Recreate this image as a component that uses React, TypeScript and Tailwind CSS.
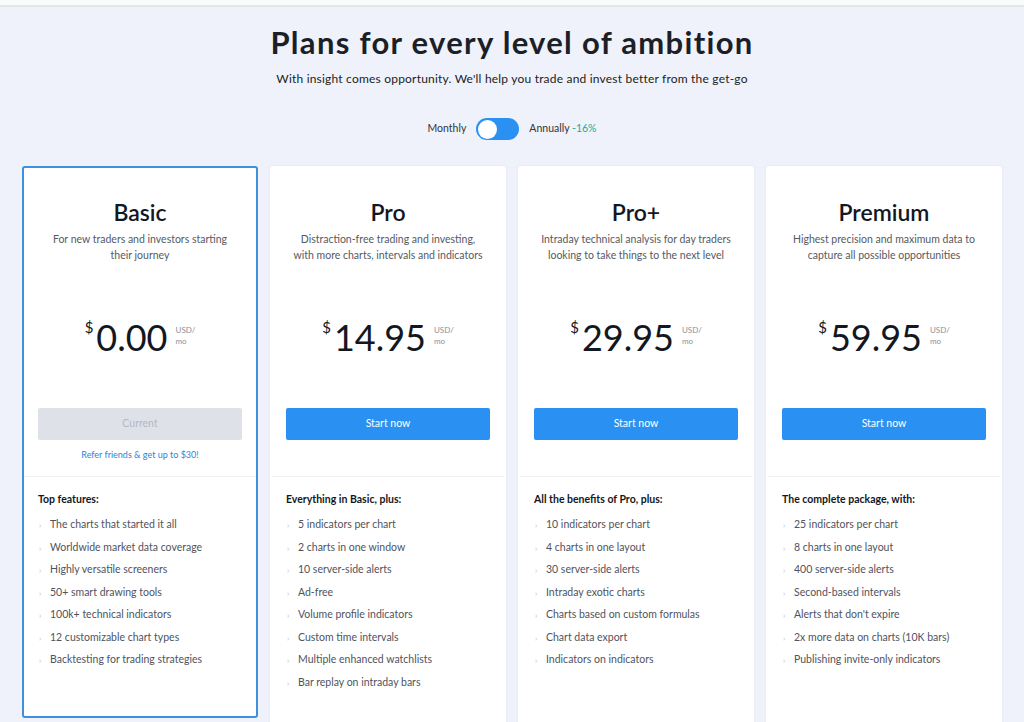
import React from "react";

const plans = [
  {
    name: "Basic",
    desc: "For new traders and investors starting their journey",
    price: "0.00",
    current: true,
    lead: "Top features:",
    items: [
      "The charts that started it all",
      "Worldwide market data coverage",
      "Highly versatile screeners",
      "50+ smart drawing tools",
      "100k+ technical indicators",
      "12 customizable chart types",
      "Backtesting for trading strategies",
    ],
  },
  {
    name: "Pro",
    desc: "Distraction-free trading and investing, with more charts, intervals and indicators",
    price: "14.95",
    current: false,
    lead: "Everything in Basic, plus:",
    items: [
      "5 indicators per chart",
      "2 charts in one window",
      "10 server-side alerts",
      "Ad-free",
      "Volume profile indicators",
      "Custom time intervals",
      "Multiple enhanced watchlists",
      "Bar replay on intraday bars",
    ],
  },
  {
    name: "Pro+",
    desc: "Intraday technical analysis for day traders looking to take things to the next level",
    price: "29.95",
    current: false,
    lead: "All the benefits of Pro, plus:",
    items: [
      "10 indicators per chart",
      "4 charts in one layout",
      "30 server-side alerts",
      "Intraday exotic charts",
      "Charts based on custom formulas",
      "Chart data export",
      "Indicators on indicators",
    ],
  },
  {
    name: "Premium",
    desc: "Highest precision and maximum data to capture all possible opportunities",
    price: "59.95",
    current: false,
    lead: "The complete package, with:",
    items: [
      "25 indicators per chart",
      "8 charts in one layout",
      "400 server-side alerts",
      "Second-based intervals",
      "Alerts that don't expire",
      "2x more data on charts (10K bars)",
      "Publishing invite-only indicators",
    ],
  },
];

export default function App() {
  return (
    <div className="h-[722px] bg-[#eff2fb] text-[#131722] font-['Lato','Open_Sans',sans-serif] overflow-hidden">
      {/* top strip */}
      <div className="h-[5px] bg-[#f8fcfa]" />
      <div className="h-[2px] bg-[#e3e7ea]" />

      {/* Heading */}
      <div className="pt-[17px] text-center">
        <h1 className="text-[31px] leading-[36px] font-bold tracking-[1.3px] text-[#1c1f26]">
          Plans for every level of ambition
        </h1>
        <p className="mt-[11px] text-[12px] leading-[16px] tracking-[0.2px] text-[#222]">
          With insight comes opportunity. We&apos;ll help you trade and invest better from the get-go
        </p>
      </div>

      {/* Billing toggle */}
      <div className="mt-[31px] flex items-center justify-center gap-[10px] text-[10.5px] text-[#333]">
        <span>Monthly</span>
        <div className="w-[43px] h-[22px] rounded-full bg-[#2a91f2] flex items-center pl-[2px]">
          <div className="w-[19px] h-[19px] rounded-full bg-white" />
        </div>
        <span>
          Annually <span className="text-[#22ab94]">-16%</span>
        </span>
      </div>

      {/* Plans */}
      <div className="mt-[26px] px-[22px] grid grid-cols-4 gap-3">
        {plans.map((p) => (
          <div
            key={p.name}
            className={
              p.current
                ? "bg-white rounded-[3px] border-2 border-[#3f90dc] h-[552px] flex flex-col"
                : "bg-white rounded-[3px] border-2 border-white shadow-[0_0_2px_rgba(0,0,0,0.08)] h-[560px] flex flex-col"
            }
          >
            <div className="px-[14px] pt-[29px] text-center">
              <h2 className="text-[23px] leading-[30px] font-semibold text-[#131722]">{p.name}</h2>
              <p className="mt-[4px] mx-auto max-w-[194px] text-[10.5px] leading-[16px] text-[#555a63]">{p.desc}</p>
            </div>

            <div className="mt-[55px] flex justify-center items-start">
              <span className="text-[15px] leading-[16px] mt-[1px] mr-[3px]">$</span>
              <span className="text-[36px] leading-[38px] font-normal">{p.price}</span>
              <span className="ml-[8px] mt-[7px] text-[8px] leading-[11px] text-[#8a8f99]">
                USD/
                <br />
                mo
              </span>
            </div>

            <div className="px-[14px] mt-[52px]">
              {p.current ? (
                <div className="h-[32px] rounded-[2px] bg-[#dfe1e9] text-[#b4b8c2] text-[10.5px] flex items-center justify-center">
                  Current
                </div>
              ) : (
                <div className="h-[32px] rounded-[2px] bg-[#2a91f2] text-white text-[10.5px] flex items-center justify-center">
                  Start now
                </div>
              )}
              <div className="h-[36px] pt-[9px] text-center text-[9px] leading-[12px] text-[#2a85d8]">
                {p.current ? "Refer friends & get up to $30!" : ""}
              </div>
            </div>

            <div className="h-px bg-[#f0f1f4]" />

            <div className="px-[14px] pt-[15px]">
              <p className="text-[10.5px] leading-[14px] font-bold text-[#131722]">{p.lead}</p>
              <ul className="mt-[8px]">
                {p.items.map((it) => (
                  <li key={it} className="flex items-center h-[22.5px] text-[10.5px] text-[#50535e]">
                    <span className="w-[12px] pl-[1px] text-[8px] text-[#b5b8c0]">›</span>
                    {it}
                  </li>
                ))}
              </ul>
            </div>
          </div>
        ))}
      </div>
    </div>
  );
}
